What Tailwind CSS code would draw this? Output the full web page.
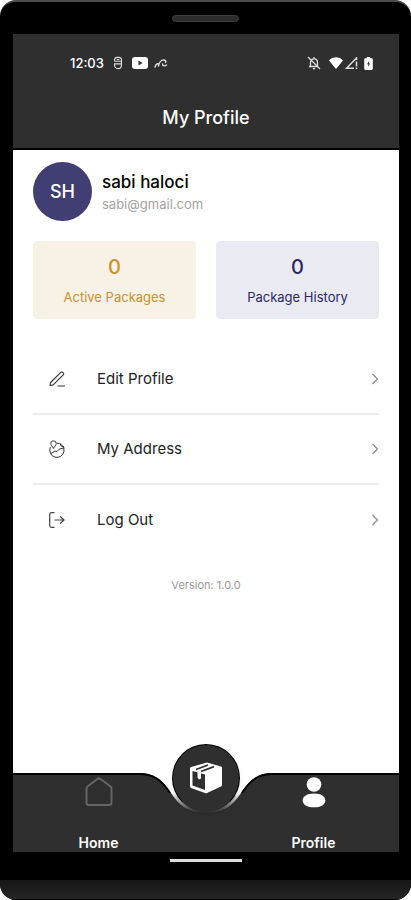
<!DOCTYPE html>
<html lang="en">
<head>
    <meta charset="UTF-8">
    <meta name="viewport" content="width=device-width, initial-scale=1.0">
    <title>My Profile</title>
    <script src="https://cdn.jsdelivr.net/npm/@tailwindcss/browser@4"></script>
</head>
<body class="bg-white font-['Inter',sans-serif]">
<div class="min-h-screen flex flex-col bg-black rounded-2xl overflow-hidden border-t-2 border-[#4a4a4a]">
    <!-- speaker -->
    <div class="h-8 flex justify-center items-center">
        <div class="w-[67px] h-[7px] rounded-full bg-[#2c2c2c] border border-[#3c3c3c]"></div>
    </div>

    <div class="flex-1 flex flex-col mr-3 ml-[13px] bg-white">
        <header class="bg-[#2f2f2f] border-b-2 border-black h-[116px]">
            <div class="h-[58px] pl-[57px] pr-[26px] flex items-center justify-between text-white">
                <div class="flex items-center">
                    <span class="text-[13px] leading-5 font-medium">12:03</span>
                    <svg class="ml-2 w-3 h-[14px]" viewBox="0 0 12 16" fill="none" stroke="#ddd" stroke-width="1.3">
                        <path d="M2 6V4a3 3 0 0 1 3-2.500h2a3 3 0 0 1 3 2.500v6c0 3-2 4.500-4 4.500s-4-1.500-4-4.500V8.500"/>
                        <path d="M2 6h8M2 9h8M4.500 4h3"/>
                    </svg>
                    <svg class="ml-2 w-4 h-3" viewBox="0 0 16 12">
                        <rect width="16" height="12" rx="3" fill="#fff"/>
                        <path d="M6.500 3.500v5l4-2.500z" fill="#2f2f2f"/>
                    </svg>
                    <svg class="ml-1.5 w-3.5 h-3" viewBox="0 0 14 12" fill="none" stroke="#ddd" stroke-width="1.4" stroke-linecap="round">
                        <path d="M1 10C1.500 8 3 6.500 5 6.500M4.500 9C5 6 7 3 9.500 3c2 0 2.800 1.200 2 2.500M8.500 7c0 2 2.500 2.500 4 1"/>
                    </svg>
                </div>
                <div class="flex items-center">
                    <svg class="w-[14px] h-[14px]" viewBox="0 0 14 14" fill="none" stroke="#ddd" stroke-width="1.3">
                        <path d="M3.500 10.500V6.500C3.500 4 5 2.800 7 2.800s3.500 1.200 3.500 3.700v4M2 10.500h9M7 1v1.800M5.800 12.600h2.400M1 1l12 12"/>
                    </svg>
                    <svg class="ml-2 w-[14px] h-3" viewBox="0 0 14 12" fill="#fff">
                        <path d="M7 12 0 3.500C2 1.300 4.500.3 7 .3s5 1 7 3.200z"/>
                    </svg>
                    <svg class="ml-0.5 w-[13px] h-3" viewBox="0 0 13 12" fill="none" stroke="#ddd" stroke-width="1.5">
                        <path d="M9 11.200H1.500L11.500 1v2M11.500 4.500v5M11.500 10.500V12"/>
                    </svg>
                    <svg class="ml-1.5 w-[9px] h-[13px]" viewBox="0 0 9 13">
                        <path d="M2.800 0h3.400v1.300h1.300c.7 0 1.300.5 1.300 1.200v9c0 .8-.6 1.500-1.300 1.500h-6C.700 13 .2 12.300.2 11.500v-9c0-.7.6-1.200 1.300-1.200h1.300z" fill="#fff"/>
                        <path d="M5 4.300 3 7.300h1.300v2.400l1.800-3.200H5z" fill="#2f2f2f"/>
                    </svg>
                </div>
            </div>
            <h1 class="pt-3.5 text-lg leading-6 font-medium text-center text-white">My Profile</h1>
        </header>

        <main class="flex-1 px-5 pt-3">
            <div class="flex items-center gap-2.5">
                <div class="size-[59px] rounded-full bg-[#413e73] text-white text-lg font-medium flex items-center justify-center">SH</div>
                <div>
                    <h2 class="text-[17px] leading-6 font-medium text-black">sabi haloci</h2>
                    <p class="text-[13px] leading-5 text-[#a3a3a3]">sabi@gmail.com</p>
                </div>
            </div>

            <div class="mt-5 grid grid-cols-2 gap-5">
                <div class="h-[78px] pt-3 rounded bg-[#f8f1e5] text-center text-[#c9932f]">
                    <p class="text-xl leading-7 font-medium">0</p>
                    <p class="mt-1.5 text-[13px] leading-5">Active Packages</p>
                </div>
                <div class="h-[78px] pt-3 rounded bg-[#eaebf2] text-center text-[#2b2768]">
                    <p class="text-xl leading-7 font-medium">0</p>
                    <p class="mt-1.5 text-[13px] leading-5">Package History</p>
                </div>
            </div>

            <div class="mt-[26px] divide-y-2 divide-[#ececec]">
                <a href="#" class="h-[70px] pl-4 flex items-center text-[15px] text-[#222]">
                    <svg class="w-4 h-4 mr-8" viewBox="0 0 16 16" fill="none" stroke="#333" stroke-width="1.1" stroke-linecap="round" stroke-linejoin="round">
                        <path d="M1 14.500 1.600 11.500 11.800 1.300c.5-.5 1.200-.5 1.700 0l.8.800c.5.500.5 1.200 0 1.700L4.200 13.900zM9 15h6.500"/>
                    </svg>
                    <span class="flex-1">Edit Profile</span>
                    <svg class="w-2 h-3" viewBox="0 0 8 12" fill="none" stroke="#888" stroke-width="1.2"><path d="m1.500 1 5 5-5 5"/></svg>
                </a>
                <a href="#" class="h-[70px] pl-4 flex items-center text-[15px] text-[#222]">
                    <svg class="w-4 h-[18px] mr-8" viewBox="0 0 16 18" fill="none" stroke="#333" stroke-width="1" stroke-linecap="round" stroke-linejoin="round">
                        <path d="M8 3a7.200 7.200 0 1 1-6.800 4.500"/>
                        <path d="M4.500 8C3 6.500 1.800 5 1.800 3.500a2.700 2.700 0 0 1 5.400 0C7.200 5 6 6.500 4.500 8z"/>
                        <path d="m2 13.500 4-2.500 2 .5 2.500-2.500 4.500-1M11.500 4l.5 2 2.500.5"/>
                    </svg>
                    <span class="flex-1">My Address</span>
                    <svg class="w-2 h-3" viewBox="0 0 8 12" fill="none" stroke="#888" stroke-width="1.2"><path d="m1.500 1 5 5-5 5"/></svg>
                </a>
                <a href="#" class="h-[70px] pl-4 flex items-center text-[15px] text-[#222]">
                    <svg class="w-4 h-4 mr-8" viewBox="0 0 16 16" fill="none" stroke="#444" stroke-width="1.2" stroke-linecap="round" stroke-linejoin="round">
                        <path d="M5 .6H2.500C1.400.6.700 1.300.7 2.400v11.200c0 1.100.7 1.800 1.800 1.800H5"/>
                        <path d="M6 8h9M11.500 4.700 15 8l-3.500 3.300"/>
                    </svg>
                    <span class="flex-1">Log Out</span>
                    <svg class="w-2 h-3" viewBox="0 0 8 12" fill="none" stroke="#888" stroke-width="1.2"><path d="m1.500 1 5 5-5 5"/></svg>
                </a>
            </div>

            <p class="mt-[22px] text-[11px] leading-4 text-center text-[#999]">Version: 1.0.0</p>
        </main>

        <nav class="relative h-[79px]">
            <!-- bar with the notch for the round button -->
            <div class="absolute inset-0 flex">
                <div class="flex-1 bg-[#2f2f2f] border-t-2 border-black"></div>
                <svg class="w-[134px] h-[79px]" viewBox="0 0 134 79">
                    <defs>
                        <linearGradient id="fade" x1="0" y1="0" x2="0" y2="1">
                            <stop offset="0.5" stop-color="#fff"/>
                            <stop offset="1" stop-color="#2f2f2f"/>
                        </linearGradient>
                    </defs>
                    <path d="M0 0h134v40H0z" fill="url(#fade)"/>
                    <path d="M0 0C14 0 23 6 32 20C40 33 50 40 67 40S94 33 102 20C111 6 120 0 134 0V79H0z" fill="#2f2f2f"/>
                    <path d="M0 1C14 1 22 6 31 20M134 1C120 1 112 6 103 20" fill="none" stroke="#000" stroke-width="2"/>
                </svg>
                <div class="flex-1 bg-[#2f2f2f] border-t-2 border-black"></div>
            </div>
            <div class="relative grid grid-cols-2 gap-11 text-white text-sm font-semibold">
                <a href="#" class="h-[79px] pt-1 flex flex-col items-center justify-between">
                    <svg class="w-7 h-[30px]" viewBox="0 0 28 30" fill="none" stroke="#656565" stroke-width="2" stroke-linejoin="round">
                        <path d="M1.500 11.500c0-1 .4-1.700 1.200-2.200L12.500 2c1-.8 2-.8 3 0l9.800 7.300c.8.500 1.200 1.200 1.200 2.200V25.500c0 1.500-1 2.500-2.500 2.500H4c-1.500 0-2.500-1-2.500-2.500z"/>
                    </svg>
                    <span class="leading-[18px]">Home</span>
                </a>
                <a href="#" class="h-[79px] pt-1 flex flex-col items-center justify-between">
                    <svg class="w-6 h-[31px]" viewBox="0 0 24 31" fill="#fff">
                        <circle cx="12" cy="7.500" r="7.300"/>
                        <path d="M12 16.500c7 0 11.300 2.800 11.300 6.900S19 30.300 12 30.300.7 27.500.7 23.400 5 16.500 12 16.500z"/>
                    </svg>
                    <span class="leading-[18px]">Profile</span>
                </a>
            </div>
            <button type="button" aria-label="Packages" class="absolute -top-[29px] left-1/2 -translate-x-1/2 size-[68px] rounded-full bg-[#2f2f2f] border border-black border-b-transparent shadow-md flex items-center justify-center">
                <svg class="w-8 h-8" viewBox="0 0 32 32">
                    <path d="M17 .5 31 4.500q1 .3 1 1.300V23q0 1-1 1.500L17 31q-1 .5-2 0L1 26q-1-.4-1-1.400V6.500q0-1 1-1.400z" fill="#fff"/>
                    <path d="M2.500 9 15 12.500V28L2.500 23.500z" fill="#2f2f2f"/>
                    <path d="M7.500 9v6.500l1.500 2 2-1V10z" fill="#fff"/>
                    <path d="m6 7.500 12-4.500M11 9.500l13-4.800" stroke="#2f2f2f" stroke-width="1.8" fill="none"/>
                </svg>
            </button>
        </nav>
    </div>

    <div class="h-12 flex flex-col justify-between items-center">
        <div class="mt-[7px] w-[72px] h-[3px] bg-[#ddd]"></div>
        <div class="w-full h-5 bg-linear-to-b from-[#161616] to-[#262626] border-b border-black"></div>
    </div>
</div>
</body>
</html>
